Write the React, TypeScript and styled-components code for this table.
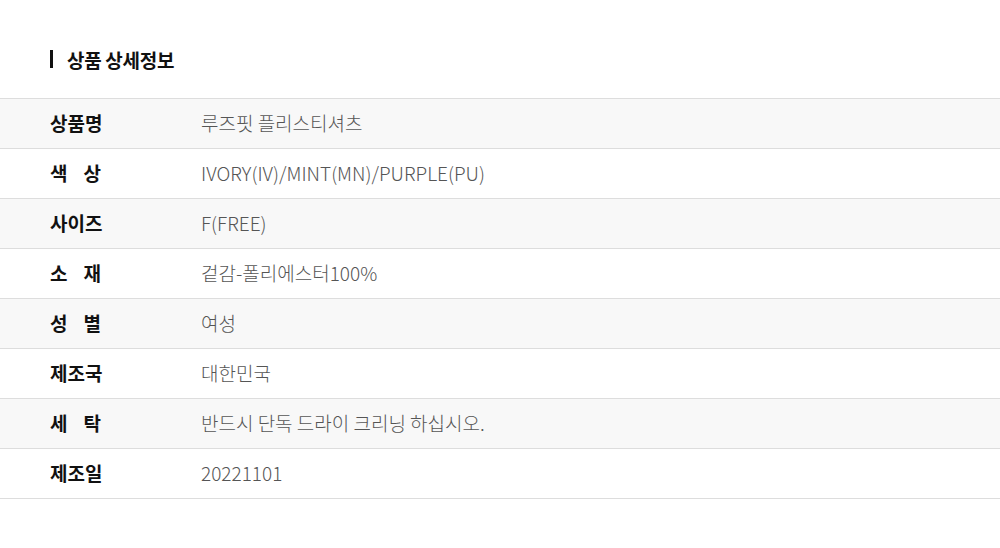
import React from "react";
import styled, { createGlobalStyle } from "styled-components";

const GlobalStyle = createGlobalStyle`
  body {
    margin: 0;
    background: #fff;
    font-family: "Noto Sans CJK KR", "Noto Sans", sans-serif;
  }
`;

const Page = styled.div`
  padding-top: 46px;
`;

const Title = styled.h2`
  display: flex;
  align-items: center;
  gap: 14px;
  margin: 0 0 26px 50px;
  height: 26px;
  font-size: 19px;
  font-weight: 700;
  color: #111;
  letter-spacing: -0.3px;

  &::before {
    content: "";
    width: 3px;
    height: 18px;
    background: #111;
  }
`;

const Table = styled.div`
  border-top: 1px solid #ddd;
`;

const Row = styled.div<{ $shaded: boolean }>`
  display: grid;
  grid-template-columns: 201px 1fr;
  align-items: center;
  height: 50px;
  padding-bottom: 3px;
  box-sizing: border-box;
  border-bottom: 1px solid #ddd;
  background: ${(p) => (p.$shaded ? "#f8f8f8" : "#fff")};
`;

const Label = styled.div`
  padding-left: 50px;
  font-size: 19px;
  font-weight: 700;
  color: #111;
`;

const Spread = styled.span`
  display: flex;
  justify-content: space-between;
  width: 51px;
`;

const Value = styled.div`
  font-size: 19px;
  color: #555;
  font-weight: 300;
`;

const rows: [string, string][] = [
  ["상품명", "루즈핏 플리스티셔츠"],
  ["색상", "IVORY(IV)/MINT(MN)/PURPLE(PU)"],
  ["사이즈", "F(FREE)"],
  ["소재", "겉감-폴리에스터100%"],
  ["성별", "여성"],
  ["제조국", "대한민국"],
  ["세탁", "반드시 단독 드라이 크리닝 하십시오."],
  ["제조일", "20221101"],
];

export default function App() {
  return (
    <Page>
      <GlobalStyle />
      <Title>상품 상세정보</Title>
      <Table>
        {rows.map(([label, value], i) => (
          <Row key={label} $shaded={i % 2 === 0}>
            <Label>
              {label.length === 2 ? (
                <Spread>
                  <span>{label[0]}</span>
                  <span>{label[1]}</span>
                </Spread>
              ) : (
                label
              )}
            </Label>
            <Value>{value}</Value>
          </Row>
        ))}
      </Table>
    </Page>
  );
}
